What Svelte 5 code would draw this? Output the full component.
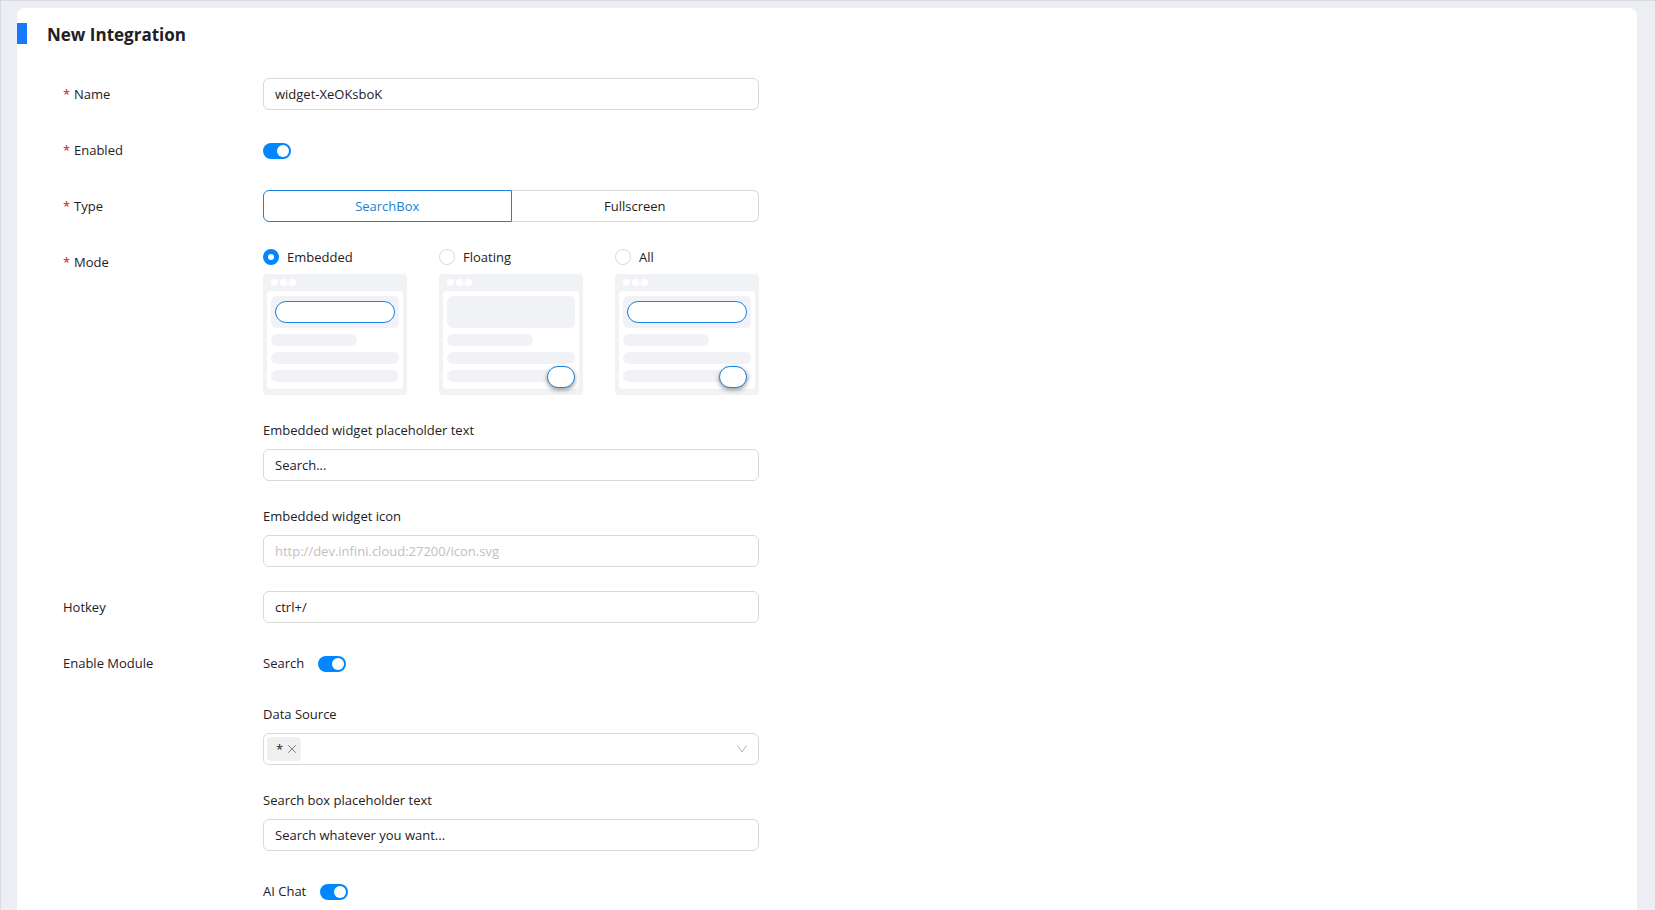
<script>
  let name = 'widget-XeOKsboK';
  let enabled = true;
  let type = 'SearchBox';
  let mode = 'Embedded';
  let placeholder = 'Search...';
  let icon = '';
  let hotkey = 'ctrl+/';
  let searchEnabled = true;
  let sources = ['*'];
  let searchPlaceholder = 'Search whatever you want...';
  let chatEnabled = true;

  const types = ['SearchBox', 'Fullscreen'];

  const modes = [
    { label: 'Embedded', bar: true, bubble: '' },
    { label: 'Floating', bar: false, bubble: 'edge' },
    { label: 'All', bar: true, bubble: 'inset' }
  ];

  function removeSource(source) {
    sources = sources.filter((s) => s !== source);
  }
</script>

<div class="page">
  <main class="card">
    <header class="title">
      <span class="marker"></span>
      <h1>New Integration</h1>
    </header>

    <form on:submit|preventDefault>
      <div class="row">
        <label class="row-label required" for="name">Name</label>
        <input class="text" id="name" type="text" bind:value={name} />
      </div>

      <div class="row">
        <label class="row-label required" for="enabled">Enabled</label>
        <div class="inline">
          <input class="switch" id="enabled" type="checkbox" role="switch" bind:checked={enabled} />
        </div>
      </div>

      <div class="row">
        <span class="row-label required" id="type-label">Type</span>
        <div class="segments" role="radiogroup" aria-labelledby="type-label">
          {#each types as item}
            <label class="segment" class:active={type === item}>
              <input type="radio" name="type" value={item} bind:group={type} />
              {item}
            </label>
          {/each}
        </div>
      </div>

      <div class="row">
        <span class="row-label required" id="mode-label">Mode</span>
        <div class="stack">
          <div class="modes" role="radiogroup" aria-labelledby="mode-label">
            {#each modes as item}
              <label class="mode">
                <span class="mode-name">
                  <input class="radio" type="radio" name="mode" value={item.label} bind:group={mode} />
                  {item.label}
                </span>
                <span class="preview">
                  <span class="dots"><i></i><i></i><i></i></span>
                  <span class="screen">
                    <span class="hero">
                      {#if item.bar}<span class="bar"></span>{/if}
                    </span>
                    <span class="line short"></span>
                    <span class="line"></span>
                    <span class="line"></span>
                  </span>
                  {#if item.bubble}<span class="bubble {item.bubble}"></span>{/if}
                </span>
              </label>
            {/each}
          </div>

          <div class="field">
            <label for="placeholder">Embedded widget placeholder text</label>
            <input class="text" id="placeholder" type="text" bind:value={placeholder} />
          </div>

          <div class="field">
            <label for="icon">Embedded widget icon</label>
            <input
              class="text"
              id="icon"
              type="text"
              placeholder="http://dev.infini.cloud:27200/icon.svg"
              bind:value={icon}
            />
          </div>
        </div>
      </div>

      <div class="row">
        <label class="row-label" for="hotkey">Hotkey</label>
        <input class="text" id="hotkey" type="text" bind:value={hotkey} />
      </div>

      <div class="row">
        <span class="row-label">Enable Module</span>
        <div class="stack">
          <div class="inline">
            <label for="search">Search</label>
            <input class="switch" id="search" type="checkbox" role="switch" bind:checked={searchEnabled} />
          </div>

          <div class="field">
            <label for="source">Data Source</label>
            <div class="tags">
              {#each sources as source}
                <span class="tag">
                  {source}
                  <button type="button" aria-label="Remove" on:click={() => removeSource(source)}>
                    <svg viewBox="0 0 10 10" width="10" height="10">
                      <path d="M1.2 1.2l7.6 7.6M8.8 1.2l-7.6 7.6" />
                    </svg>
                  </button>
                </span>
              {/each}
              <select id="source">
                <option value=""></option>
              </select>
              <svg class="arrow" viewBox="0 0 12 12" width="12" height="12">
                <path d="M1.5 2.5L6 9l4.5-6.5" />
              </svg>
            </div>
          </div>

          <div class="field">
            <label for="search-placeholder">Search box placeholder text</label>
            <input class="text" id="search-placeholder" type="text" bind:value={searchPlaceholder} />
          </div>

          <div class="inline">
            <label for="chat">AI Chat</label>
            <input class="switch" id="chat" type="checkbox" role="switch" bind:checked={chatEnabled} />
          </div>
        </div>
      </div>
    </form>
  </main>
</div>

<style>
  :global(body) {
    background: #edeef3;
    color: #1f2023;
    font-family: 'Open Sans', 'Noto Sans', sans-serif;
    font-size: 13px;
    line-height: 22px;
  }

  .page {
    border-left: 1px solid #d9dadd;
    border-top: 1px solid #d9dadd;
    box-sizing: border-box;
    display: flex;
    min-height: 100vh;
    padding: 7px 18px 0 16px;
  }

  .card {
    background: #fff;
    border-radius: 8px 8px 0 0;
    flex: 1;
    min-width: 0;
    padding-top: 15px;
  }

  .title {
    align-items: flex-start;
    display: flex;
    gap: 20px;
  }

  .marker {
    background: #1677ff;
    height: 21px;
    width: 10px;
  }

  h1 {
    font-size: 17px;
    font-weight: 700;
    line-height: 24px;
    margin: 0;
  }

  form {
    display: flex;
    flex-direction: column;
    gap: 24px;
    padding: 31px 46px 0;
  }

  .row {
    display: grid;
    grid-template-columns: 200px minmax(0, 496px);
  }

  .row-label {
    line-height: 32px;
  }

  .required::before {
    color: #cf1322;
    content: '*';
    display: inline-block;
    margin-right: 4px;
    width: 7px;
  }

  .stack {
    display: flex;
    flex-direction: column;
    gap: 24px;
  }

  .field {
    display: flex;
    flex-direction: column;
    gap: 8px;
  }

  .inline {
    align-items: center;
    display: flex;
    gap: 14px;
    height: 32px;
  }

  .text {
    background: #fff;
    border: 1px solid #d9d9d9;
    border-radius: 6px;
    box-sizing: border-box;
    color: inherit;
    font: inherit;
    height: 32px;
    outline: none;
    padding: 0 11px;
    width: 100%;
  }

  .text:focus {
    border-color: #0087ff;
  }

  .text::placeholder {
    color: #bfbfbf;
    opacity: 1;
  }

  .switch {
    appearance: none;
    background: #bfbfbf;
    border-radius: 8px;
    box-sizing: border-box;
    cursor: pointer;
    display: flex;
    height: 16px;
    margin: 2px 0 0;
    padding: 2px;
    width: 28px;
  }

  .switch::before {
    background: #fff;
    border-radius: 50%;
    content: '';
    height: 12px;
    width: 12px;
  }

  .switch:checked {
    background: #0087ff;
    justify-content: flex-end;
  }

  .segments {
    display: flex;
  }

  .segment {
    border: 1px solid #d9d9d9;
    box-sizing: border-box;
    cursor: pointer;
    flex: 1;
    height: 32px;
    line-height: 30px;
    text-align: center;
  }

  .segment:first-child {
    border-radius: 6px 0 0 6px;
  }

  .segment:last-child {
    border-left: 0;
    border-radius: 0 6px 6px 0;
  }

  .segment.active {
    border: 1px solid #1a82d8;
    color: #1a82d8;
  }

  .segment input {
    appearance: none;
    margin: 0;
    position: absolute;
  }

  .modes {
    display: flex;
    gap: 32px;
  }

  .mode {
    cursor: pointer;
    display: flex;
    flex: 1;
    flex-direction: column;
    gap: 6px;
  }

  .mode-name {
    align-items: center;
    display: flex;
    gap: 8px;
  }

  .radio {
    appearance: none;
    border: 1px solid #d9d9d9;
    border-radius: 50%;
    box-sizing: border-box;
    height: 16px;
    margin: 0;
    width: 16px;
  }

  .radio:checked {
    border: 5px solid #0087ff;
  }

  .preview {
    background: #f0f2f6;
    border-radius: 4px;
    display: flex;
    flex-direction: column;
    gap: 5px;
    padding: 5px 4px 6px;
    position: relative;
  }

  .dots {
    display: flex;
    gap: 2px;
    padding-left: 4px;
  }

  .dots i {
    background: #fff;
    border-radius: 50%;
    height: 7px;
    width: 7px;
  }

  .screen {
    background: #fff;
    border-radius: 4px;
    display: flex;
    flex-direction: column;
    gap: 6px;
    padding: 5px 4px 7px;
  }

  .hero {
    background: #f0f2f6;
    border-radius: 6px;
    box-sizing: border-box;
    height: 32px;
    padding: 5px 4px;
  }

  .bar,
  .bubble {
    background: #fff;
    border: 1px solid #1a82d8;
    border-radius: 11px;
    box-sizing: border-box;
    display: block;
    height: 22px;
  }

  .line {
    background: #f0f2f6;
    border-radius: 6px;
    height: 12px;
  }

  .short {
    width: 67%;
  }

  .bubble {
    bottom: 7px;
    box-shadow: 0 2px 4px rgba(0, 0, 0, 0.4);
    position: absolute;
    width: 28px;
  }

  .edge {
    right: 8px;
  }

  .inset {
    right: 12px;
  }

  .tags {
    align-items: center;
    border: 1px solid #d9d9d9;
    border-radius: 6px;
    box-sizing: border-box;
    display: flex;
    height: 32px;
    padding: 0 10px 0 3px;
  }

  .tag {
    align-items: center;
    background: #f0f0f0;
    border-radius: 4px;
    box-sizing: border-box;
    display: flex;
    gap: 4px;
    height: 24px;
    padding: 0 4px 0 9px;
  }

  .tag button {
    background: none;
    border: 0;
    cursor: pointer;
    display: flex;
    padding: 0;
  }

  svg {
    fill: none;
    stroke: #808080;
    stroke-width: 1;
  }

  select {
    appearance: none;
    background: none;
    border: 0;
    flex: 1;
    font: inherit;
    height: 30px;
    outline: none;
  }

  .arrow {
    stroke: #b4b4b4;
  }
</style>
